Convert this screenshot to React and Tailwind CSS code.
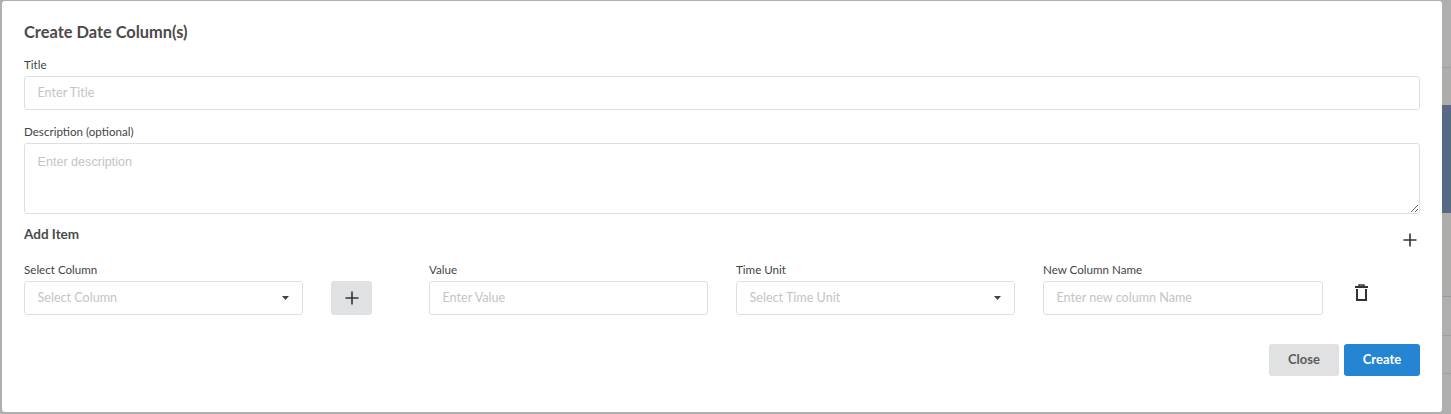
const labelCls = "block text-[11.6px] leading-[14px] text-[#444]"
const inputCls = "w-full h-[34px] px-[12.5px] border border-[#dedfe0] rounded-[3px] bg-white text-[12.6px] text-[#c4c4c4] flex items-center"

const Caret = () => (
  <svg width="7" height="4" viewBox="0 0 7 4" className="absolute right-[13px] top-[14px]">
    <path d="M0 0h7L3.5 4z" fill="#444" />
  </svg>
)

const PlusIcon = () => (
  <svg width="14" height="14" viewBox="0 0 14 14" stroke="#333" strokeWidth="1.6">
    <path d="M7 0.5v13M0.5 7h13" />
  </svg>
)

const TrashIcon = () => (
  <svg width="13" height="17" viewBox="0 0 13 17" fill="none" stroke="#333" strokeWidth="2">
    <path d="M0 3h13" />
    <path d="M4 2V1h5v1" strokeWidth="1.5" />
    <path d="M2 5v11h9V5" />
  </svg>
)

const Field = ({ label, placeholder, select, width = "w-[279px]" }) => (
  <div className={width}>
    <label className={labelCls}>{label}</label>
    <div className={`relative mt-[4px] ${inputCls}`}>
      {placeholder}
      {select && <Caret />}
    </div>
  </div>
)

export default function App() {
  return (
    <div className="flex h-[414px] w-full bg-[#afafaf] pl-[2px] overflow-hidden font-['Lato','Liberation_Sans',sans-serif]">
      <div className="w-[1440px] h-[411px] mt-[1px] bg-white rounded-[3px] px-[22px] pt-[22px]">
        <h2 className="text-[16.4px] leading-[18px] font-bold text-[#4a4a4a]">Create Date Column(s)</h2>

        <label className={`${labelCls} mt-[17px]`}>Title</label>
        <div className={`mt-[4px] ${inputCls}`}>Enter Title</div>

        <label className={`${labelCls} mt-[15px]`}>Description (optional)</label>
        <textarea
          placeholder="Enter description"
          className="block w-full h-[71px] mt-[4px] px-[12.5px] py-[11px] border border-[#dedfe0] rounded-[3px] font-['Liberation_Sans',sans-serif] text-[12.6px] leading-[15px] placeholder:text-[#c4c4c4] outline-none"
        />

        <div className="flex justify-between mt-[12px] pr-[3px]">
          <h3 className="text-[13.5px] leading-[16px] font-bold text-[#4a4a4a]">Add Item</h3>
          <div className="mt-[7px]">
            <PlusIcon />
          </div>
        </div>

        <div className="flex items-start mt-[16px]">
          <Field label="Select Column" placeholder="Select Column" select />
          <button className="w-[41px] h-[34px] mt-[18px] ml-[28px] bg-[#e0e1e3] rounded-[3px] flex items-center justify-center">
            <PlusIcon />
          </button>
          <div className="ml-[57px]">
            <Field label="Value" placeholder="Enter Value" />
          </div>
          <div className="ml-[28px]">
            <Field label="Time Unit" placeholder="Select Time Unit" select />
          </div>
          <div className="ml-[28px]">
            <Field label="New Column Name" placeholder="Enter new column Name" width="w-[280px]" />
          </div>
          <div className="ml-[32px] mt-[21px]">
            <TrashIcon />
          </div>
        </div>

        <div className="flex justify-end gap-[5px] mt-[29px]">
          <button className="w-[70px] h-[32px] rounded-[3px] bg-[#e0e1e3] text-[13px] font-bold text-[#5a5a5a]">Close</button>
          <button className="w-[76px] h-[32px] rounded-[3px] bg-[#2585d2] text-[13px] font-bold text-white">Create</button>
        </div>
      </div>

      {/* page behind the overlay, only this strip shows */}
      <div className="flex-1 flex flex-col">
        <div className="h-[68px] border-b border-[#a0a0a0]" />
        <div className="h-[37px] bg-[#adaeac]" />
        <div className="h-[108px] bg-[#566a85]" />
        <div className="h-[84px] bg-[#adaeac] border-b border-[#999]" />
        <div className="h-[39px] border-b border-[#a0a0a0]" />
        <div className="h-[38px] border-b border-[#a0a0a0]" />
      </div>
    </div>
  )
}
